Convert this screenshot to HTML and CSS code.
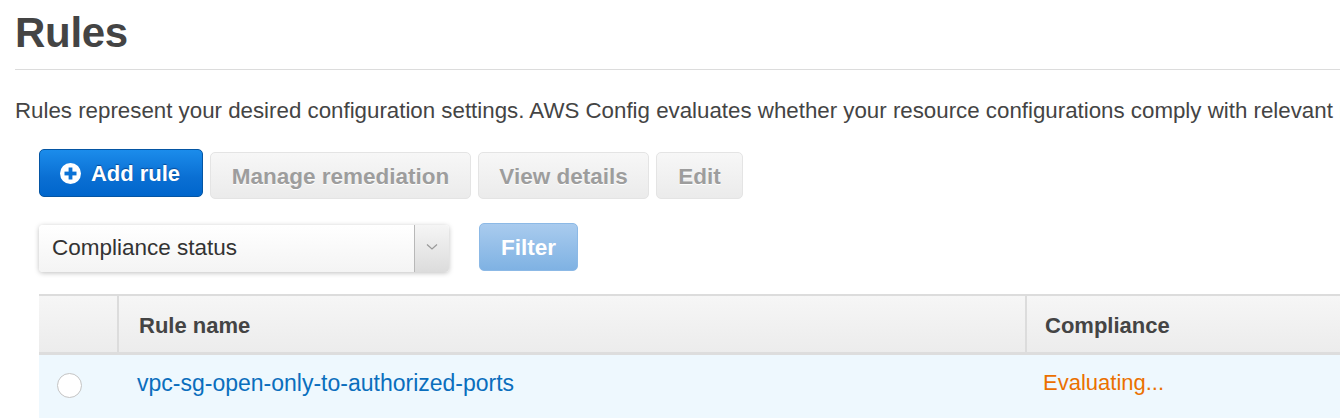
FILE: index.html
```html
<!DOCTYPE html>
<html>
<head>
<meta charset="utf-8">
<link rel="stylesheet" href="styles.css">
</head>
<body>
<div class="page">
  <h1 class="title">Rules</h1>
  <div class="rule-line"></div>
  <p class="intro">Rules represent your desired configuration settings. AWS Config evaluates whether your resource configurations comply with relevant rules.</p>
  <div class="section">
    <div class="toolbar">
      <button class="btn btn-primary">
        <svg class="plus" width="21" height="21" viewBox="0 0 21 21"><circle cx="10.5" cy="10.5" r="10.5" fill="#fff"/><rect x="8.6" y="4.5" width="3.8" height="12" fill="#0a72d6"/><rect x="4.5" y="8.6" width="12" height="3.8" fill="#0a72d6"/></svg>
        <span>Add rule</span>
      </button>
      <button class="btn btn-disabled w-manage">Manage remediation</button>
      <button class="btn btn-disabled w-view">View details</button>
      <button class="btn btn-disabled w-edit">Edit</button>
    </div>
    <div class="filter-row">
      <div class="select">
        <span class="select-label">Compliance status</span>
        <span class="select-arrow"><svg width="12" height="8" viewBox="0 0 12 8"><path d="M1 1.5 L6 6 L11 1.5" fill="none" stroke="#999" stroke-width="1.2"/></svg></span>
      </div>
      <button class="btn btn-filter">Filter</button>
    </div>
    <div class="table">
      <div class="thead">
        <div class="cell c-sel"></div>
        <div class="cell c-name">Rule name</div>
        <div class="cell c-comp">Compliance</div>
      </div>
      <div class="trow">
        <div class="cell c-sel"><span class="radio"></span></div>
        <div class="cell c-name"><a class="link">vpc-sg-open-only-to-authorized-ports</a></div>
        <div class="cell c-comp"><span class="evaluating">Evaluating...</span></div>
      </div>
    </div>
  </div>
</div>
</body>
</html>
```

FILE: styles.css
```css
* { box-sizing: border-box; }
html, body { margin: 0; padding: 0; background: #fff; overflow: hidden; }
body { font-family: "Liberation Sans", Arial, Helvetica, sans-serif; color: #444; width: 1340px; height: 418px; }
.page { padding-left: 15px; white-space: nowrap; }
.title { margin: 0; padding-top: 9px; font-size: 42px; line-height: 48px; font-weight: bold; color: #444; letter-spacing: -0.3px; }
.rule-line { margin-top: 12px; height: 1px; background: #dcdcdc; }
.intro { margin: 28px 0 0 0; font-size: 22.3px; line-height: 26px; color: #444; }
.section { padding-left: 24px; }
.toolbar { display: flex; align-items: flex-start; gap: 7px; margin-top: 25px; }
.btn { font-family: "Liberation Sans", Arial, sans-serif; font-weight: bold; font-size: 22.5px; border-radius: 5px; padding: 0; display: flex; align-items: center; justify-content: center; }
.btn-primary { width: 164px; height: 48px; background: linear-gradient(#1b8ceb, #0a6fd3 60%, #0066cc); border: 1px solid #0455a3; color: #fff; gap: 10px; padding-right: 2px; padding-top: 2px; font-size: 22px; text-shadow: 0 -1px 1px rgba(0,40,100,0.6); }
.plus { display: block; margin-top: -2px; }
.btn-disabled { margin-top: 3px; height: 47px; padding-top: 2px; background: linear-gradient(#f7f7f7, #ebebeb); border: 1px solid #e4e4e4; color: #9d9d9d; text-shadow: 0 1px 0 #fff; }
.w-manage { width: 261px; }
.w-view { width: 171px; }
.w-edit { width: 87px; }
.filter-row { display: flex; align-items: flex-start; gap: 30px; margin-top: 24px; }
.select { margin-top: 2px; width: 410px; height: 47px; display: flex; background: linear-gradient(#ffffff, #f4f4f4); border-radius: 4px; box-shadow: 0 1px 5px rgba(0,0,0,0.25); }
.select-label { flex: 1; padding-left: 13px; font-size: 22.5px; line-height: 46px; color: #333; }
.select-arrow { width: 35px; border-left: 1px solid #b8b8b8; background: linear-gradient(#f5f5f5, #dcdcdc); border-radius: 0 4px 4px 0; display: flex; align-items: center; justify-content: center; padding-bottom: 3px; }
.select-arrow svg { display: block; }
.btn-filter { width: 99px; height: 48px; padding-top: 2px; background: linear-gradient(#a9cbee, #7fb2e3); border: 1px solid #8cb9e6; color: #fff; }
.table { margin-top: 22px; border-top: 2px solid #dcdcdc; width: 1301px; }
.thead { display: flex; height: 59px; background: linear-gradient(#f6f6f6, #ececec); border-bottom: 3px solid #dddddd; }
.thead .cell { padding-top: 4px; }
.trow { display: flex; height: 64px; background: #eef8fe; }
.cell { display: flex; align-items: center; }
.c-sel { width: 78px; }
.c-name { width: 908px; padding-left: 20px; }
.c-comp { flex: 1; padding-left: 18px; }
.thead .cell { font-weight: bold; font-size: 22px; color: #444; }
.thead .c-name, .thead .c-comp { border-left: 2px solid #dcdcdc; }
.trow .cell { padding-bottom: 8px; }
.trow .c-sel { padding-left: 18px; padding-bottom: 4px; }
.trow .c-name { padding-left: 20px; }
.trow .c-comp { padding-left: 18px; }
.radio { display: block; width: 25px; height: 25px; border-radius: 50%; border: 1px solid #c4c4c4; background: #fff; }
.link { color: #0a6ebd; font-size: 23px; text-decoration: none; }
.evaluating { color: #eb7000; font-size: 22px; }
```
